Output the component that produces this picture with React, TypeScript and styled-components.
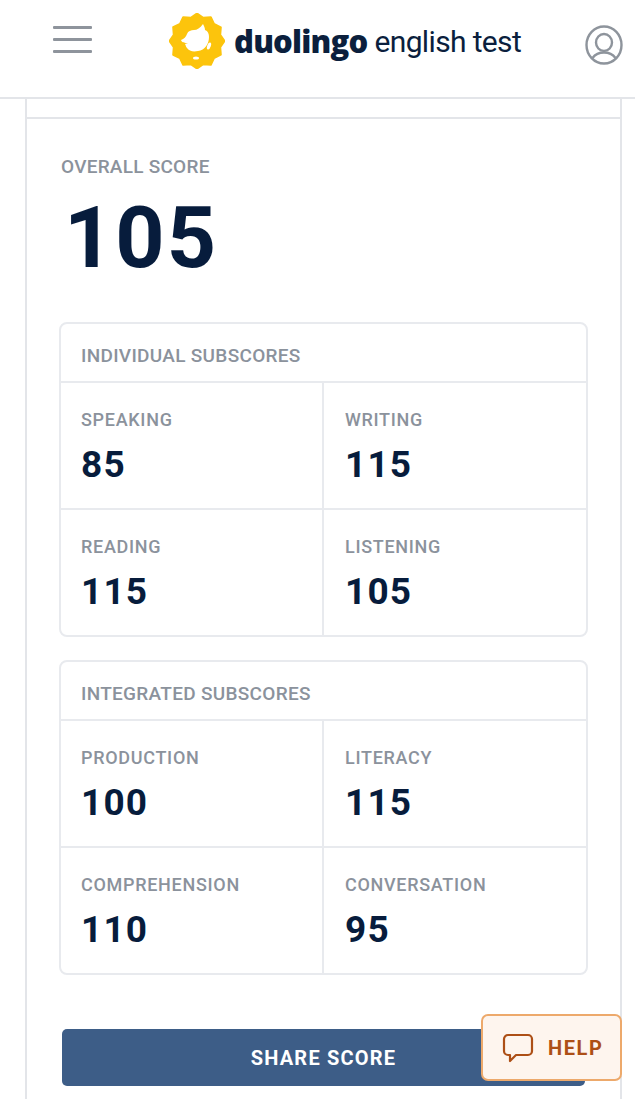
import * as React from "react";
import styled, { createGlobalStyle } from "styled-components";

const GlobalStyle = createGlobalStyle`
  html, body {
    margin: 0;
    padding: 0;
    background: #fff;
    font-family: "Roboto", "Liberation Sans", sans-serif;
  }
  * { box-sizing: border-box; }
`;

const Page = styled.div`
  position: relative;
  width: 635px;
  height: 1099px;
  overflow: hidden;
  background: #fff;
`;

const Header = styled.header`
  height: 99px;
  border-bottom: 2px solid #e3e5e9;
  display: grid;
  grid-template-columns: 169px 1fr 50px;
  align-items: start;
  padding-right: 12px;
`;

const MenuButton = styled.div`
  margin: 26px 0 0 53px;
  width: 39px;
  display: flex;
  flex-direction: column;
  gap: 9px;
`;

const MenuLine = styled.span`
  display: block;
  height: 3px;
  background: #8e949c;
  border-radius: 1px;
`;

const Logo = styled.div`
  display: flex;
  align-items: center;
  margin-top: 13px;
  height: 56px;
`;

const LogoMark = styled.svg`
  width: 56px;
  height: 56px;
  flex: none;
`;

const LogoBold = styled.span`
  margin-left: 9px;
  font-family: "Open Sans", sans-serif;
  font-weight: 800;
  font-size: 31px;
  letter-spacing: -0.8px;
  color: #0b1f3d;
`;

const LogoLight = styled.span`
  margin-left: 7px;
  font-family: "Roboto", sans-serif;
  font-weight: 400;
  font-size: 30px;
  letter-spacing: -0.65px;
  color: #0b1f3d;
`;

const Avatar = styled.svg`
  width: 38px;
  height: 40px;
  margin-top: 25px;
  justify-self: end;
`;

const Sheet = styled.main`
  margin-left: 25px;
  width: 597px;
  min-height: 1000px;
  border-left: 2px solid #e3e5e9;
  border-right: 2px solid #e3e5e9;
  padding-top: 18px;
`;

const Content = styled.div`
  border-top: 2px solid #e3e5e9;
  padding: 38px 32px 0 32px;
`;

const Label = styled.div`
  font-size: 18px;
  line-height: 20px;
  font-weight: 500;
  letter-spacing: 0.7px;
  color: #8b929c;
  text-transform: uppercase;
`;

const OverallLabel = styled(Label)`
  margin-left: 2px;
  font-size: 19px;
  letter-spacing: 0.25px;
`;

const OverallValue = styled.div`
  margin: 18px 0 0 5px;
  font-size: 86px;
  line-height: 86px;
  font-weight: 700;
  letter-spacing: 2px;
  color: #071c3c;
`;

const Panel = styled.section<{ $top: number }>`
  margin-top: ${(p) => p.$top}px;
  border: 2px solid #e8eaee;
  border-radius: 8px;
  width: 529px;
`;

const PanelTitle = styled(Label)`
  height: 59px;
  padding: 22px 0 0 20px;
  border-bottom: 2px solid #e8eaee;
  font-size: 19px;
  letter-spacing: 0.3px;
`;

const Grid = styled.div`
  display: grid;
  grid-template-columns: 261px 1fr;
`;

const Cell = styled.div<{ $right?: boolean; $bottom?: boolean }>`
  height: ${(p) => (p.$bottom ? 125 : 127)}px;
  padding: 27px 0 0 ${(p) => (p.$right ? 21 : 20)}px;
  border-left: ${(p) => (p.$right ? "2px solid #e8eaee" : "none")};
  border-bottom: ${(p) => (p.$bottom ? "none" : "2px solid #e8eaee")};
`;

const CellValue = styled.div`
  margin-top: 15px;
  font-size: 37px;
  line-height: 40px;
  font-weight: 700;
  letter-spacing: 1.2px;
  color: #071c3c;
`;

const ShareButton = styled.button`
  display: block;
  width: 523px;
  height: 57px;
  margin: 54px 0 0 3px;
  border: none;
  border-radius: 5px;
  background: #3d5d87;
  color: #fff;
  font-family: inherit;
  font-size: 20px;
  font-weight: 700;
  letter-spacing: 1.2px;
`;

const HelpButton = styled.div`
  position: absolute;
  left: 481px;
  top: 1014px;
  width: 141px;
  height: 67px;
  border: 2px solid #eda96b;
  border-radius: 7px;
  background: #fef5ee;
  display: flex;
  align-items: center;
  padding-left: 19px;
  gap: 14px;
  color: #ad4f16;
  font-size: 20px;
  font-weight: 700;
  letter-spacing: 1.6px;
`;

const HelpIcon = styled.svg`
  width: 32px;
  height: 30px;
  flex: none;
`;

type Score = { label: string; value: number };

const individual: Score[] = [
  { label: "Speaking", value: 85 },
  { label: "Writing", value: 115 },
  { label: "Reading", value: 115 },
  { label: "Listening", value: 105 },
];

const integrated: Score[] = [
  { label: "Production", value: 100 },
  { label: "Literacy", value: 115 },
  { label: "Comprehension", value: 110 },
  { label: "Conversation", value: 95 },
];

// scalloped badge outline around the owl
const badgePath = () => {
  const pts: string[] = [];
  const n = 12;
  for (let i = 0; i < n; i++) {
    const a0 = (i / n) * Math.PI * 2 - Math.PI / 2;
    const a1 = ((i + 0.5) / n) * Math.PI * 2 - Math.PI / 2;
    const a2 = ((i + 1) / n) * Math.PI * 2 - Math.PI / 2;
    const p = (a: number, r: number) => `${(28 + Math.cos(a) * r).toFixed(1)} ${(28 + Math.sin(a) * r).toFixed(1)}`;
    if (i === 0) pts.push(`M${p(a0, 24)}`);
    pts.push(`L${p(a0, 27.5)} L${p(a1, 24)}`);
    pts.push(`L${p(a2, 27.5)}`);
  }
  return pts.join(" ") + "Z";
};

const SubscorePanel = (p: { title: string; scores: Score[]; top: number }) => (
  <Panel $top={p.top}>
    <PanelTitle>{p.title}</PanelTitle>
    <Grid>
      {p.scores.map((s, i) => (
        <Cell key={s.label} $right={i % 2 === 1} $bottom={i > 1}>
          <Label>{s.label}</Label>
          <CellValue>{s.value}</CellValue>
        </Cell>
      ))}
    </Grid>
  </Panel>
);

export default function App() {
  return (
    <Page>
      <GlobalStyle />
      <Header>
        <MenuButton>
          <MenuLine />
          <MenuLine />
          <MenuLine />
        </MenuButton>
        <Logo>
          <LogoMark viewBox="0 0 56 56">
            <path d={badgePath()} fill="#fcc40c" stroke="#fcc40c" strokeWidth="2" strokeLinejoin="round" />
            <path
              d="M12 27c3-1 5-3 6-6 1-3 4-4 7-4 3 0 6-2 9-6 1 2 2 4 2 6 3 1 4 4 4 7 0 7-4 13-11 14-5 1-9 0-11-3-1-1-1-2-2-4l3-1c-3 0-6 0-7-3z"
              fill="#fff"
            />
            <ellipse cx="40" cy="33" rx="1.8" ry="3.6" transform="rotate(20 40 33)" fill="#fff" />
            <ellipse cx="27" cy="45" rx="3" ry="1.6" fill="#fff" />
          </LogoMark>
          <LogoBold>duolingo</LogoBold>
          <LogoLight>english test</LogoLight>
        </Logo>
        <Avatar viewBox="0 0 38 40" fill="none" stroke="#8e949c" strokeWidth="2.4">
          <ellipse cx="19" cy="20" rx="17.5" ry="18.5" />
          <ellipse cx="19" cy="17.5" rx="8" ry="8.5" />
          <path d="M7.5 33c3-4 7-5.5 11.5-5.5s8.500 1.500 11.500 5.500" />
        </Avatar>
      </Header>
      <Sheet>
        <Content>
          <OverallLabel>Overall score</OverallLabel>
          <OverallValue>105</OverallValue>
          <SubscorePanel title="Individual subscores" scores={individual} top={41} />
          <SubscorePanel title="Integrated subscores" scores={integrated} top={23} />
          <ShareButton>SHARE SCORE</ShareButton>
        </Content>
      </Sheet>
      <HelpButton>
        <HelpIcon viewBox="0 0 32 30" fill="none" stroke="#ad4f16" strokeWidth="2.2" strokeLinejoin="round">
          <path d="M6 2h20a4 4 0 0 1 4 4v12a4 4 0 0 1-4 4H14l-6 6v-6H6a4 4 0 0 1-4-4V6a4 4 0 0 1 4-4z" />
        </HelpIcon>
        HELP
      </HelpButton>
    </Page>
  );
}
